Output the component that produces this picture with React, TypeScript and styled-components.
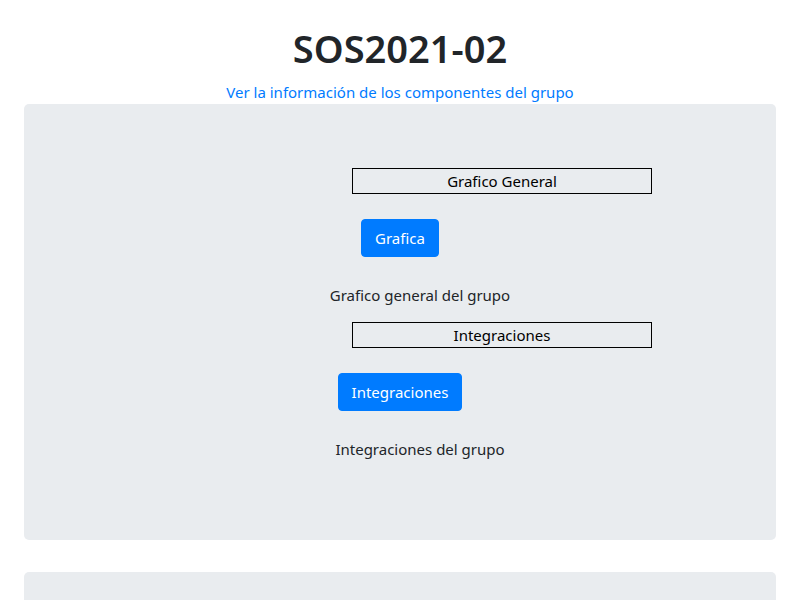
import React from "react";
import styled, { createGlobalStyle } from "styled-components";

const Global = createGlobalStyle`
  html, body { margin: 0; padding: 0; background: #fff; }
  body {
    font-family: "Noto Sans", "Open Sans", "Liberation Sans", sans-serif;
    font-size: 15px;
    line-height: 1.6;
    color: #212529;
  }
`;

const Page = styled.main`
  padding: 0 24px;
`;

const Header = styled.header`
  text-align: center;
`;

const Title = styled.h1`
  margin: 24px 0 8px;
  font-size: 38px;
  line-height: 48px;
  font-weight: 600;
  color: #212529;
`;

const InfoLink = styled.a`
  display: block;
  color: #007bff;
  text-decoration: none;
  font-size: 15px;
  line-height: 24px;
`;

const Jumbotron = styled.section<{ $tall?: boolean }>`
  background: #e9ecef;
  border-radius: 5px;
  padding: 64px 32px;
  margin-bottom: 32px;
  min-height: ${(p) => (p.$tall ? "0" : "120px")};
`;

const Section = styled.div`
  display: flex;
  flex-direction: column;
`;

const SectionTitle = styled.div`
  margin-left: 296px;
  width: 300px;
  box-sizing: border-box;
  border: 1px solid #000;
  text-align: center;
  line-height: 24px;
  color: #000;
`;

const ButtonRow = styled.div`
  text-align: center;
  margin-top: 25px;
`;

const Button = styled.button`
  font-family: inherit;
  font-size: 15px;
  line-height: 24px;
  padding: 6px 13px;
  border: 1px solid #007bff;
  border-radius: 4px;
  background: #007bff;
  color: #fff;
  cursor: pointer;
`;

const Description = styled.p`
  margin: 26px 0 15px;
  padding-left: 40px;
  text-align: center;
  line-height: 24px;
`;

const items = [
  { title: "Grafico General", button: "Grafica", text: "Grafico general del grupo" },
  { title: "Integraciones", button: "Integraciones", text: "Integraciones del grupo" },
];

export default function App() {
  return (
    <>
      <Global />
      <Page>
        <Header>
          <Title>SOS2021-02</Title>
          <InfoLink href="#">Ver la información de los componentes del grupo</InfoLink>
        </Header>
        <Jumbotron $tall>
          {items.map((it) => (
            <Section key={it.title}>
              <SectionTitle>{it.title}</SectionTitle>
              <ButtonRow>
                <Button>{it.button}</Button>
              </ButtonRow>
              <Description>{it.text}</Description>
            </Section>
          ))}
        </Jumbotron>
        <Jumbotron />
      </Page>
    </>
  );
}
